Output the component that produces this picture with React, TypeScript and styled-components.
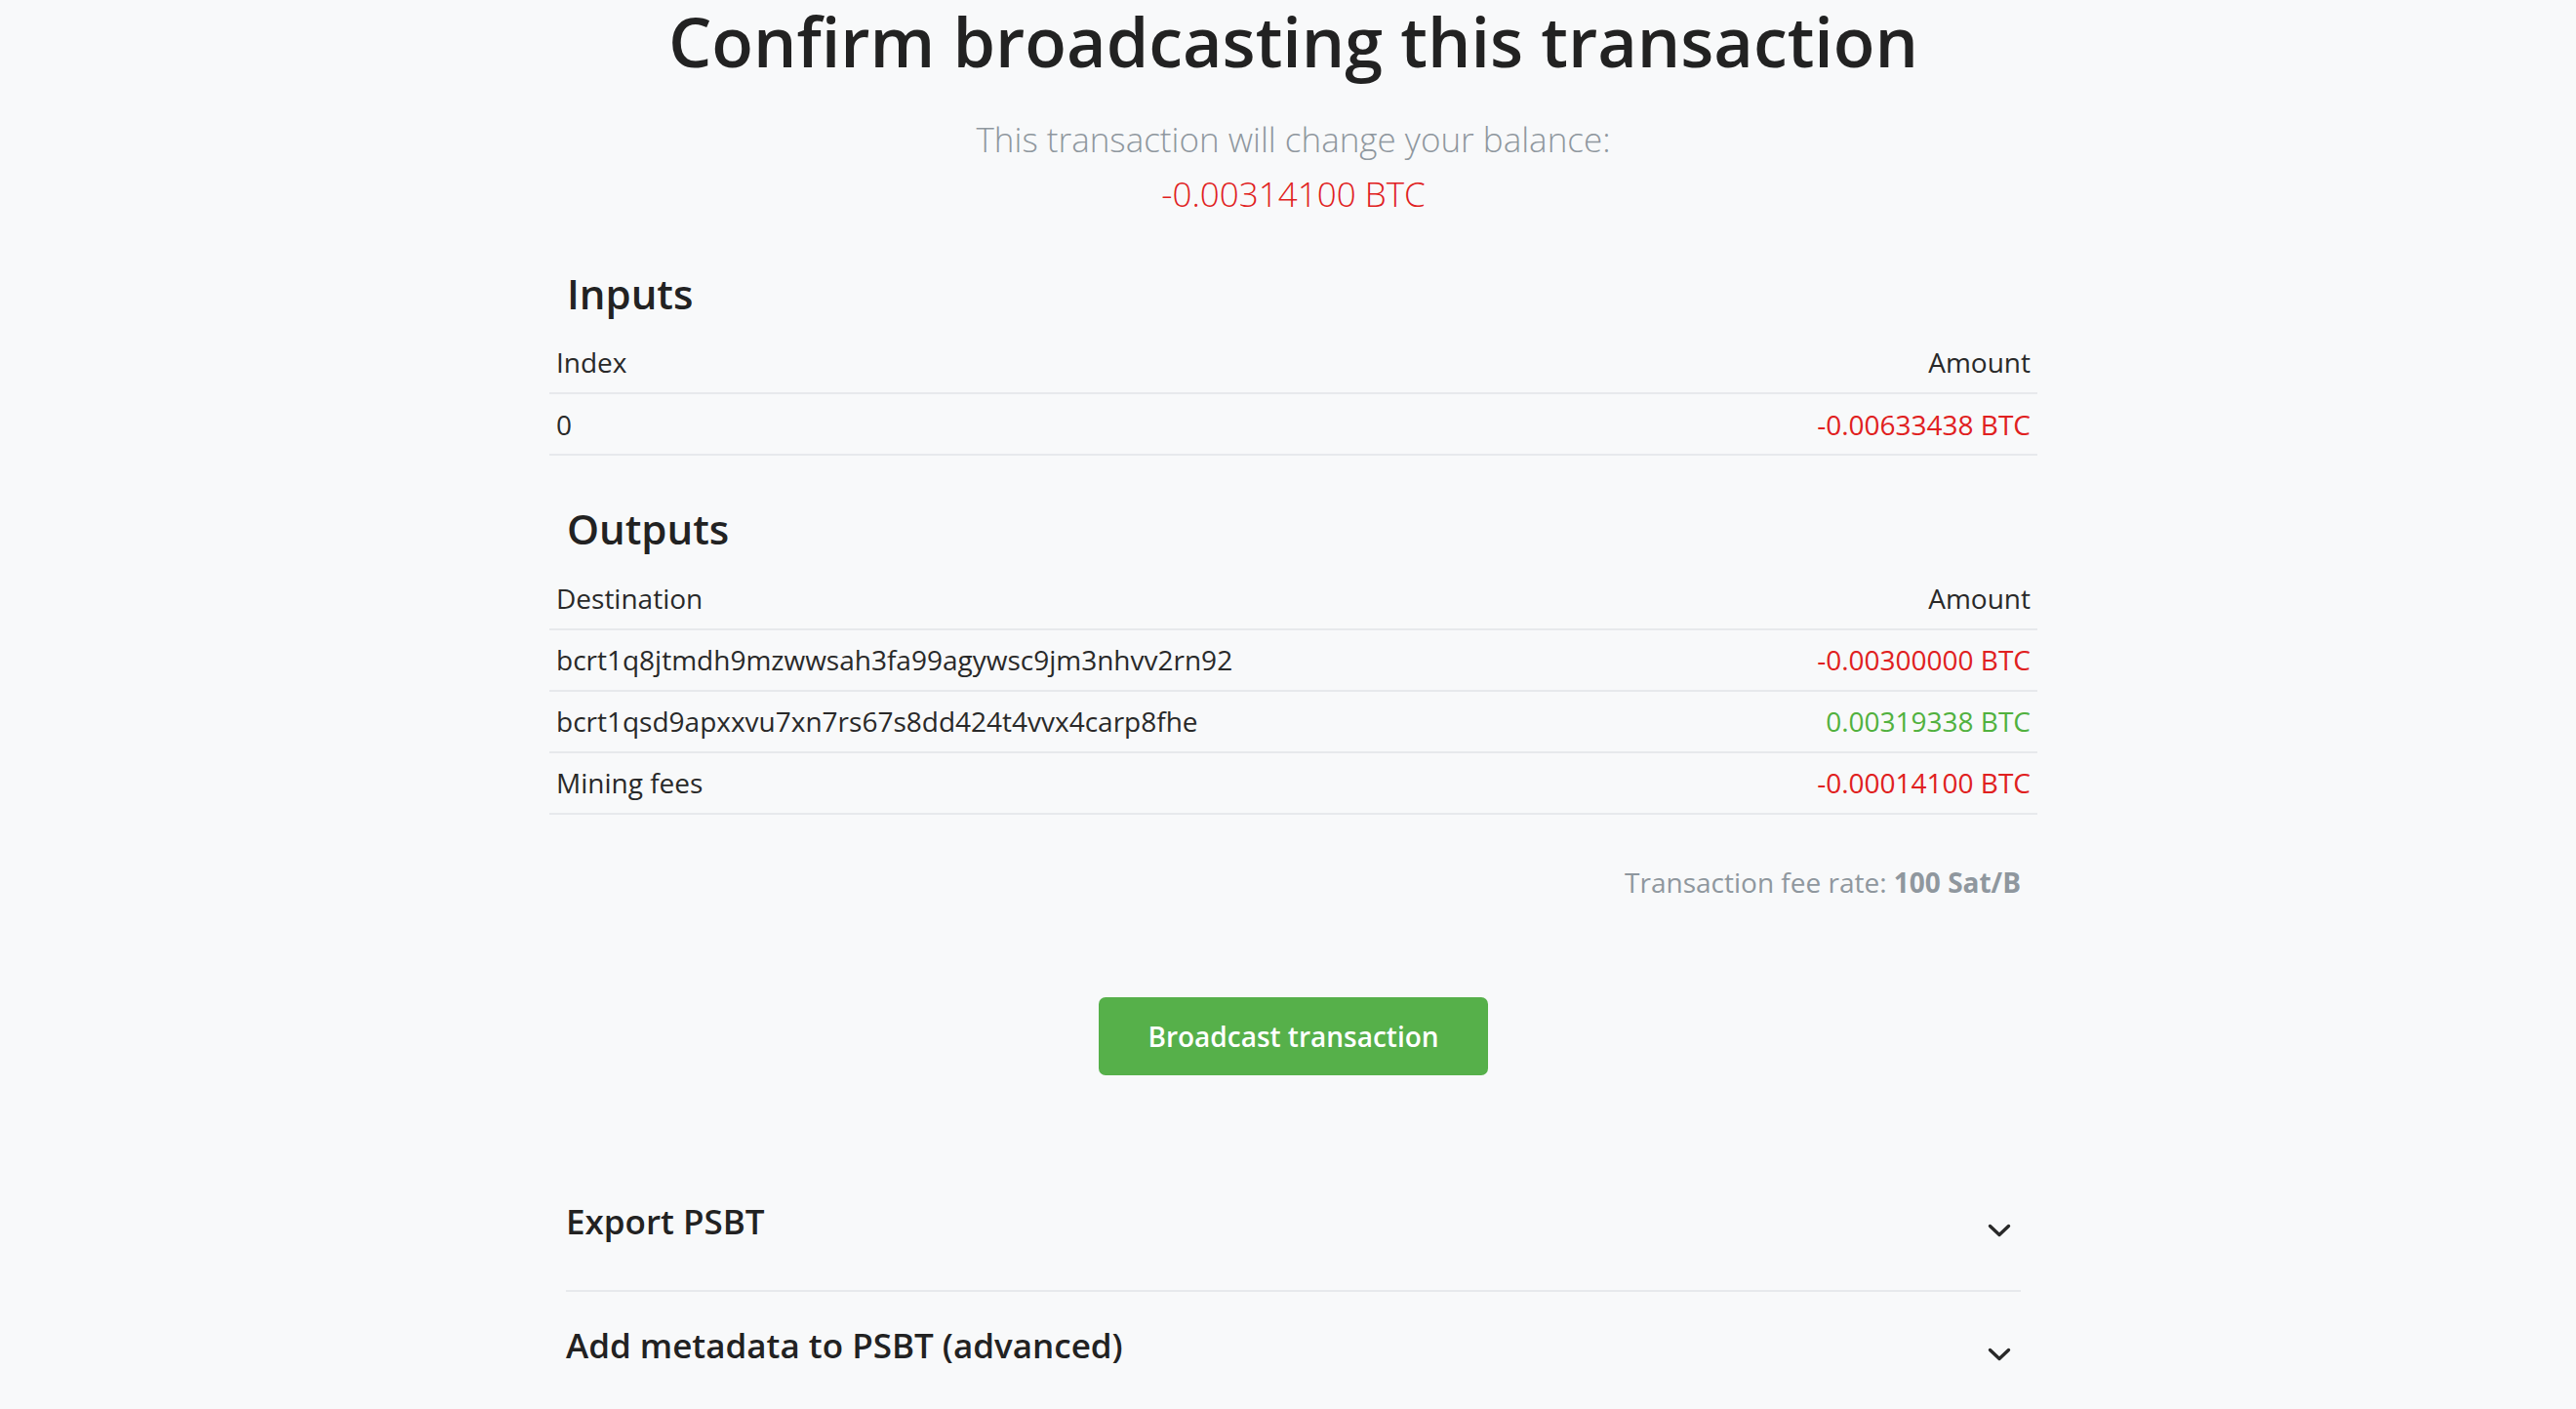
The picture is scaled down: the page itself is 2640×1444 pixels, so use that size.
import styled, { createGlobalStyle } from 'styled-components'

const GlobalStyle = createGlobalStyle`
  html, body {
    margin: 0;
    padding: 0;
    background: #f8f9fa;
  }
  body {
    font-family: 'Open Sans', 'Noto Sans', sans-serif;
    color: #292929;
    font-size: 28px;
    line-height: 1.5;
  }
`

const colors = {
  text: '#292929',
  muted: '#8f979e',
  red: '#e02020',
  green: '#51b13e',
  border: '#e7e9ec',
}

type Amount = { label: string; value: string; positive?: boolean }

const inputs: Amount[] = [{ label: '0', value: '-0.00633438 BTC' }]

const outputs: Amount[] = [
  { label: 'bcrt1q8jtmdh9mzwwsah3fa99agywsc9jm3nhvv2rn92', value: '-0.00300000 BTC' },
  { label: 'bcrt1qsd9apxxvu7xn7rs67s8dd424t4vvx4carp8fhe', value: '0.00319338 BTC', positive: true },
  { label: 'Mining fees', value: '-0.00014100 BTC' },
]

function Chevron() {
  return (
    <svg width="24" height="14" viewBox="0 0 24 14" fill="none">
      <polyline points="2.5,2.5 12,11.5 21.5,2.5" stroke="#292929" strokeWidth="3.4" strokeLinecap="round" strokeLinejoin="round" />
    </svg>
  )
}

function TxTable({ title, first, rows }: { title: string; first: string; rows: Amount[] }) {
  return (
    <Section>
      <SectionTitle>{title}</SectionTitle>
      <Table>
        <thead>
          <tr>
            <Th>{first}</Th>
            <Th $right>Amount</Th>
          </tr>
        </thead>
        <tbody>
          {rows.map((r) => (
            <tr key={r.label}>
              <Td>{r.label}</Td>
              <Td $right $color={r.positive ? colors.green : colors.red}>
                {r.value}
              </Td>
            </tr>
          ))}
        </tbody>
      </Table>
    </Section>
  )
}

export default function App() {
  return (
    <>
      <GlobalStyle />
      <Page>
        <Container>
          <Title>Confirm broadcasting this transaction</Title>
          <Lead>
            This transaction will change your balance:
            <br />
            <BalanceChange>-0.00314100 BTC</BalanceChange>
          </Lead>

          <TxTable title="Inputs" first="Index" rows={inputs} />
          <TxTable title="Outputs" first="Destination" rows={outputs} />

          <FeeRate>
            Transaction fee rate: <strong>100 Sat/B</strong>
          </FeeRate>

          <Actions>
            <BroadcastButton>Broadcast transaction</BroadcastButton>
          </Actions>

          <Accordion>
            <AccordionItem>
              <AccordionHeader>
                <AccordionTitle>Export PSBT</AccordionTitle>
                <Chevron />
              </AccordionHeader>
            </AccordionItem>
            <AccordionItem>
              <AccordionHeader>
                <AccordionTitle>Add metadata to PSBT (advanced)</AccordionTitle>
                <Chevron />
              </AccordionHeader>
            </AccordionItem>
          </Accordion>
        </Container>
      </Page>
    </>
  )
}

const Page = styled.div`
  padding: 1px 0 0 11px;
  min-height: 1444px;
  box-sizing: border-box;
`

const Container = styled.div`
  width: 1525px;
  margin: 0 auto;
`

const Title = styled.h1`
  margin: -1px 0 0;
  font-size: 70px;
  font-weight: 600;
  line-height: 1.2;
  text-align: center;
  color: #222;
`

const Lead = styled.p`
  margin: 31px 0 0;
  font-size: 35px;
  font-weight: 300;
  line-height: 1.6;
  text-align: center;
  color: ${colors.muted};
`

const BalanceChange = styled.span`
  color: ${colors.red};
`

const Section = styled.section`
  margin-top: 49px;
  & + & {
    margin-top: 50px;
  }
`

const SectionTitle = styled.h3`
  margin: 0 0 14px;
  padding: 0 18px;
  font-size: 42px;
  font-weight: 600;
  line-height: 1.2;
  color: #222;
`

const Table = styled.table`
  width: 100%;
  border-collapse: collapse;
  font-size: 28px;
  line-height: 1.5;
`

const Th = styled.th<{ $right?: boolean }>`
  padding: 10px 7px;
  font-weight: 400;
  text-align: ${(p) => (p.$right ? 'right' : 'left')};
  border-bottom: 2px solid ${colors.border};
  color: ${colors.text};
`

const Td = styled.td<{ $right?: boolean; $color?: string }>`
  padding: 9.5px 7px;
  text-align: ${(p) => (p.$right ? 'right' : 'left')};
  border-bottom: 2px solid ${colors.border};
  color: ${(p) => p.$color || colors.text};
`

const FeeRate = styled.p`
  margin: 48px 0 0;
  padding: 0 17px;
  font-size: 28px;
  text-align: right;
  color: ${colors.muted};

  strong {
    font-weight: 700;
  }
`

const Actions = styled.div`
  display: flex;
  justify-content: center;
  margin-top: 97px;
`

const BroadcastButton = styled.button`
  height: 80px;
  padding: 0 50px;
  border: none;
  border-radius: 7px;
  background: #56b04a;
  color: #fff;
  font-family: 'Open Sans', sans-serif;
  font-size: 28px;
  font-weight: 600;
  cursor: pointer;
`

const Accordion = styled.div`
  margin: 98px 17px 0;
`

const AccordionItem = styled.div`
  & + & {
    border-top: 2px solid ${colors.border};
  }
  & + & > div {
    padding-top: 34px;
  }
`

const AccordionHeader = styled.div`
  display: flex;
  justify-content: space-between;
  align-items: flex-start;
  padding: 31px 10px 49px 0;

  svg {
    margin-top: 23px;
    flex-shrink: 0;
  }
`

const AccordionTitle = styled.h4`
  margin: 0;
  font-size: 35px;
  font-weight: 600;
  line-height: 1.2;
  color: #222;
`
